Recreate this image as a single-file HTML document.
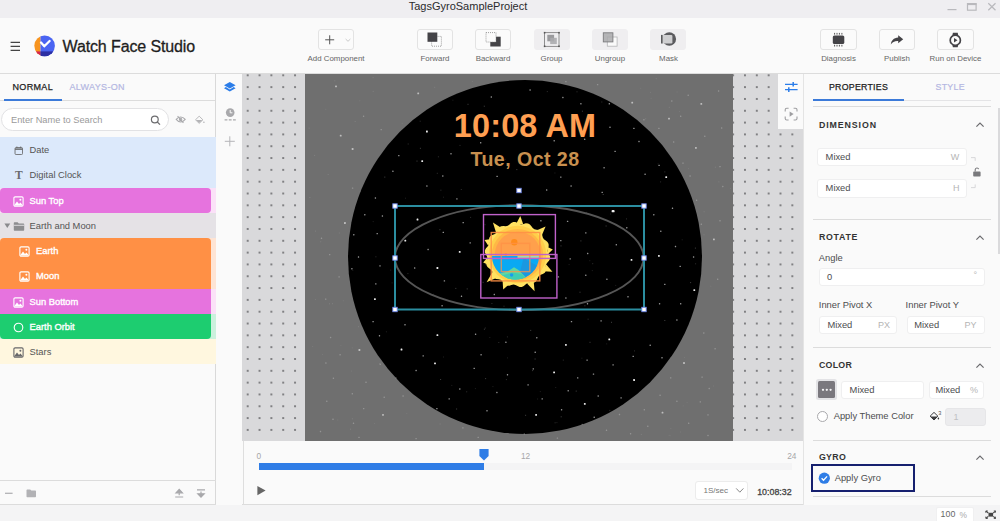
<!DOCTYPE html>
<html>
<head>
<meta charset="utf-8">
<title>Watch Face Studio</title>
<style>
*{box-sizing:border-box;margin:0;padding:0}
html,body{width:1000px;height:521px;overflow:hidden;background:#fafafa;font-family:"Liberation Sans",sans-serif;color:#555}
.abs{position:absolute}
#root{position:relative;width:1000px;height:521px;overflow:hidden}
#titlebar{left:0;top:0;width:1000px;height:18px;background:#efeef1}
#titlebar .t{left:0;width:936px;top:0;text-align:center;font-size:11px;line-height:13px;color:#2a2a2c}
#toolbar{left:0;top:18px;width:1000px;height:56px;background:#fafafa;border-bottom:1px solid #dcdcdc}
.tb{position:absolute;top:29px;width:36px;height:21px;border:1px solid #e3e3e3;border-radius:3px;background:#fbfbfb}
.tb.dis{background:#efeef0;border-color:#efeef0}
.tl{position:absolute;top:53px;width:90px;text-align:center;font-size:7.9px;line-height:12px;color:#666;white-space:nowrap}
#left{left:0;top:74px;width:216px;height:431px;background:#fafafa;border-right:1px solid #d9d9d9}
.row{position:absolute;left:0;height:25.2px;font-size:9.35px;line-height:26.4px;color:#555;white-space:nowrap}
.row span{position:absolute;top:0}
.row svg{position:absolute;margin-top:0.5px}
.sel span{color:#fff;-webkit-text-stroke:0.35px #fff}
#iconbar{left:216px;top:74px;width:26px;height:431px;background:#fafafa}
#canvas{left:242px;top:74px;width:561px;height:367px;overflow:hidden;background-color:#d9d9db}
#timeline{left:243px;top:441px;width:560px;height:64px;background:#fafafa;border-left:1px solid #dedede;border-bottom:1px solid #dcdcdc}
#right{left:803px;top:74px;width:197px;height:431px;background:#fafafa;border-left:1px solid #e4e4e4}
#status{left:0;top:505px;width:1000px;height:16px;background:#f4f4f5}
.sec{position:absolute;font-size:8.8px;font-weight:bold;letter-spacing:0.9px;color:#333;line-height:12px;white-space:nowrap}
.lbl{position:absolute;font-size:9.35px;color:#4d4d4f;line-height:12px;white-space:nowrap}
.inp{position:absolute;background:#fff;border:1px solid #efeff0;border-radius:3px}
.unit{position:absolute;font-size:9px;color:#b5b5b5;line-height:12px}
.tn{font-size:8.3px;line-height:10px;color:#a6a6a8}
.sep{position:absolute;left:813px;width:178px;height:1px;background:#dcdcdc}
</style>
</head>
<body>
<div id="root">
<!-- TITLE BAR -->
<div id="titlebar" class="abs"><div class="t abs">TagsGyroSampleProject</div>
<svg class="abs" style="left:940px;top:0" width="60" height="18" viewBox="0 0 60 18" fill="none" stroke="#b9b9bd" stroke-width="1.2">
<path d="M7.5 9.6H16.5"/><rect x="27.5" y="3.6" width="8.6" height="6.6"/><path d="M27 4.2H36.5" stroke-width="1.8"/><path d="M48.3 3.3L55.5 10.2M55.5 3.3L48.3 10.2"/></svg>
</div>
<!-- TOOLBAR -->
<div id="toolbar" class="abs"></div>
<div id="tbitems">
<svg class="abs" style="left:8px;top:38px" width="16" height="16" viewBox="0 0 16 16" stroke="#444" stroke-width="1.2"><path d="M2.6 4.3H12M2.6 8.3H12M2.6 12.4H12"/></svg>
<svg class="abs" style="left:33px;top:34px" width="24" height="24" viewBox="0 0 24 24">
<defs><clipPath id="lc"><circle cx="11.6" cy="11.85" r="10.3"/></clipPath></defs>
<g clip-path="url(#lc)"><rect x="0" y="0" width="7.5" height="24" fill="#f7941f"/><rect x="7.5" y="0" width="17" height="24" fill="#4a64f2"/><rect x="0" y="17.4" width="7.5" height="7" fill="#d4274e"/><rect x="7.5" y="17.4" width="17" height="7" fill="#2c2fa3"/></g>
<path d="M8 8.5L11.3 12.3L16.6 7" stroke="#fff" stroke-width="2.3" fill="none" stroke-linecap="round" stroke-linejoin="round"/></svg>
<div class="abs" style="left:62.5px;top:35.5px;font-size:16px;line-height:22px;color:#1e1e1e;letter-spacing:-0.12px;-webkit-text-stroke:0.3px #1e1e1e;white-space:nowrap" id="wfs" >Watch Face Studio</div>
<div class="tb" style="left:318px"></div><div class="tl" style="left:291px">Add Component</div>
<div class="tb" style="left:417px"></div><div class="tl" style="left:390px">Forward</div>
<div class="tb" style="left:475px"></div><div class="tl" style="left:448px">Backward</div>
<div class="tb dis" style="left:533.5px"></div><div class="tl" style="left:506.5px">Group</div>
<div class="tb dis" style="left:592px"></div><div class="tl" style="left:565px">Ungroup</div>
<div class="tb dis" style="left:650px"></div><div class="tl" style="left:623.5px">Mask</div>
<div class="tb" style="left:820px;width:36.5px"></div><div class="tl" style="left:793.5px">Diagnosis</div>
<div class="tb" style="left:879px"></div><div class="tl" style="left:852px">Publish</div>
<div class="tb" style="left:937px;width:36.5px"></div><div class="tl" style="left:910.5px">Run on Device</div>

<svg class="abs" style="left:312px;top:24px" width="700" height="32" viewBox="312 24 700 32">
<!-- add -->
<path d="M329.7 35.3V44.3M325.2 39.8H334.2" stroke="#555" stroke-width="1" fill="none"/>
<path d="M345.6 39L348 41.3L350.4 39" stroke="#c4c4c4" stroke-width="0.9" fill="none"/>
<!-- forward -->
<rect x="431.6" y="36.4" width="9.8" height="9.8" fill="none" stroke="#888" stroke-width="0.8" stroke-dasharray="1 1"/>
<rect x="427.5" y="32.5" width="9.8" height="9.3" fill="#444347"/>
<!-- backward -->
<rect x="490.3" y="36.7" width="10.4" height="9.8" fill="#444347"/>
<rect x="486" y="32.6" width="10" height="9.4" fill="#fbfbfb" stroke="#888" stroke-width="0.8" stroke-dasharray="1 1"/>
<!-- group -->
<rect x="544.6" y="32.7" width="14.4" height="13.6" fill="none" stroke="#666" stroke-width="0.7"/>
<g fill="#555"><rect x="543.8" y="31.9" width="1.6" height="1.6"/><rect x="558.2" y="31.9" width="1.6" height="1.6"/><rect x="543.8" y="45.5" width="1.6" height="1.6"/><rect x="558.2" y="45.5" width="1.6" height="1.6"/></g>
<rect x="547.3" y="34.8" width="6.8" height="6.5" fill="#9a9a9d"/><rect x="550.2" y="37.8" width="6.6" height="6.3" fill="#ababae" opacity="0.9"/>
<!-- ungroup -->
<rect x="607.3" y="37" width="9.8" height="9.2" fill="#fafafa" stroke="#b4b4b6" stroke-width="0.8"/>
<rect x="603.3" y="32.8" width="9.6" height="9.1" fill="#a9a9ab" fill-opacity="0.85" stroke="#7a7a7d" stroke-width="0.9"/>
<!-- mask -->
<circle cx="669.3" cy="39" r="6.8" fill="#5b5b5e"/>
<rect x="661.4" y="34.9" width="11" height="8.6" rx="1.2" fill="#cfcfd1"/><rect x="661" y="34.9" width="1.6" height="8.6" fill="#5b5b5e"/>
<!-- diagnosis -->
<rect x="832.8" y="35.5" width="11.5" height="8.6" rx="1.6" fill="#444347"/>
<g stroke="#555" stroke-width="1"><path d="M834.6 32.9V34.6M837 32.9V34.6M839.4 32.9V34.6M841.9 32.9V34.6M834.6 44.8V46.5M837 44.8V46.5M839.4 44.8V46.5M841.9 44.8V46.5"/></g>
<!-- publish -->
<path d="M898.2 35.2L903.2 39.2L898.2 43.2V40.9C894.6 40.7 892.4 41.9 890.8 44.5C891.2 40.4 893.6 37.7 898.2 37.4Z" fill="#444347"/>
<!-- run -->
<path d="M952.3 35.6L952.9 32.8H957.7L958.3 35.6ZM952.3 44.7L952.9 47.3H957.7L958.3 44.7Z" fill="#444347"/>
<circle cx="955.3" cy="40.15" r="5.1" fill="#fbfbfb" stroke="#444347" stroke-width="1.7"/>
<path d="M954 37.9L957.5 40.15L954 42.4Z" fill="#444347"/>
</svg>
</div>
<!-- LEFT PANEL -->
<div id="left" class="abs"></div>
<div id="leftitems">
<div class="abs" style="left:0;top:100px;width:215px;height:1px;background:#dcdcdc"></div>
<div class="abs" style="left:4px;top:99.2px;width:57.5px;height:1.7px;background:#3b7ad9"></div>
<div class="abs" id="tabn" style="left:12.5px;top:81px;font-size:9px;line-height:13px;color:#222;letter-spacing:0.34px;-webkit-text-stroke:0.25px #222">NORMAL</div>
<div class="abs" id="taba" style="left:69.5px;top:81px;font-size:9px;line-height:13px;color:#b4b7e2;letter-spacing:0.34px;-webkit-text-stroke:0.2px #b4b7e2">ALWAYS-ON</div>
<div class="abs" style="left:1.3px;top:108.2px;width:168px;height:23px;border:1px solid #e2e2e4;border-radius:12px;background:#fff"></div>
<div class="abs" id="srch" style="left:11px;top:114px;font-size:9.25px;line-height:13px;color:#9a9a9a;white-space:nowrap">Enter Name to Search</div>
<svg class="abs" style="left:148px;top:113px" width="60" height="14" viewBox="148 113 60 14">
<g fill="none" stroke="#6c6c6f" stroke-width="1.2"><circle cx="154.8" cy="119.5" r="3.4"/><path d="M157.3 122L160 124.6"/></g>
<g fill="none" stroke="#a9a9ac" stroke-width="1.05"><path d="M176.2 119.4C177.6 117.6 179 116.9 180.6 116.9S183.8 117.6 185.2 119.4C183.8 121.2 182.2 121.9 180.6 121.9S177.6 121.2 176.2 119.4Z"/><circle cx="180.6" cy="119.4" r="1.2"/><path d="M177.6 116.2L183.4 122.8"/></g>
<path d="M199.2 116.2L202.9 119.8L199.2 123.4L195.5 119.8Z" fill="#fafafa" stroke="#b3b3b6" stroke-width="0.9" stroke-linejoin="round"/><path d="M196 120H202.4L199.2 123.1Z" fill="#b3b3b6"/><circle cx="203.9" cy="122.2" r="0.8" fill="#b3b3b6"/>
</svg>
<div class="row" style="top:137px;width:215.5px;height:25px;background:#dce9fb"><svg style="margin-top:0.5px;left:13.6px;top:8.2px" width="9.6" height="9.6" viewBox="0 0 11 11"><rect x="1.2" y="1.8" width="8.6" height="8" rx="1.2" fill="none" stroke="#666" stroke-width="1"/><path d="M1.2 3.6H9.8" stroke="#666" stroke-width="1.6"/><path d="M3.3 0.6V2.4M7.7 0.6V2.4" stroke="#666" stroke-width="1"/></svg><span style="top:0px;left:29.5px">Date</span></div>
<div class="row" style="top:162px;width:215.5px;height:26px;background:#dce9fb"><span style="top:0.1px;left:15px;font-family:'Liberation Serif',serif;font-size:11.5px;font-weight:bold;color:#6a6a6d">T</span><span style="top:0.25px;left:29.5px">Digital Clock</span></div>
<div class="abs" style="left:0;top:188px;width:215.5px;height:25px;background:#fbe1f8"></div><div class="row sel" style="top:188px;width:210.5px;height:25px;background:#e673de;border-radius:4px 4px 4px 4px"><svg style="margin-top:0.0px;left:12.6px;top:7.6px" width="11" height="11" viewBox="0 0 11 11"><rect x="0.9" y="0.9" width="9.2" height="9.2" rx="1.2" fill="none" stroke="#fff" stroke-width="1.1"/><path d="M1 9.6L4 5.6L6 8L7.4 6.6L10 9.6Z" fill="#fff"/><circle cx="7.4" cy="3.7" r="1" fill="#fff"/></svg><span style="top:-0.5px;left:29.5px">Sun Top</span></div>
<div class="row" style="top:213px;width:215.5px;height:25px;background:#e5e2e6"><svg style="margin-top:0.25px;left:3.5px;top:10.2px" width="7" height="6" viewBox="0 0 7 6"><path d="M0.4 0.6H6.2L3.3 5Z" fill="#8a8a8d"/></svg><svg style="margin-top:0.25px;left:12.5px;top:7.4px" width="12" height="11" viewBox="0 0 12 11"><path d="M0.8 2.2C0.8 1.6 1.2 1.2 1.8 1.2H4.6L5.8 2.4H10.2C10.8 2.4 11.2 2.8 11.2 3.4V8.8C11.2 9.4 10.8 9.8 10.2 9.8H1.8C1.2 9.8 0.8 9.4 0.8 8.8Z" fill="#8d8d90"/><path d="M0.8 4.3H11.2" stroke="#e5e2e6" stroke-width="0.9"/></svg><span style="top:-0.25px;left:29.5px">Earth and Moon</span></div>
<div class="abs" style="left:0;top:238px;width:215.5px;height:25px;background:#fee4d4"></div><div class="row sel" style="top:238px;width:210.5px;height:25px;background:#ff9045;border-radius:4px 4px 0 0"><svg style="margin-top:0.5px;left:19.2px;top:7.6px" width="11" height="11" viewBox="0 0 11 11"><rect x="0.9" y="0.9" width="9.2" height="9.2" rx="1.2" fill="none" stroke="#fff" stroke-width="1.1"/><path d="M1 9.6L4 5.6L6 8L7.4 6.6L10 9.6Z" fill="#fff"/><circle cx="7.4" cy="3.7" r="1" fill="#fff"/></svg><span style="top:0px;left:36px">Earth</span></div>
<div class="abs" style="left:0;top:263px;width:215.5px;height:26px;background:#fee4d4"></div><div class="row sel" style="top:263px;width:210.5px;height:26px;background:#ff9045;border-radius:0"><svg style="margin-top:0.75px;left:19.2px;top:7.6px" width="11" height="11" viewBox="0 0 11 11"><rect x="0.9" y="0.9" width="9.2" height="9.2" rx="1.2" fill="none" stroke="#fff" stroke-width="1.1"/><path d="M1 9.6L4 5.6L6 8L7.4 6.6L10 9.6Z" fill="#fff"/><circle cx="7.4" cy="3.7" r="1" fill="#fff"/></svg><span style="top:0.25px;left:36px">Moon</span></div>
<div class="abs" style="left:0;top:289px;width:215.5px;height:25px;background:#fbe1f8"></div><div class="row sel" style="top:289px;width:210.5px;height:25px;background:#e673de;border-radius:0"><svg style="margin-top:0.0px;left:12.6px;top:7.6px" width="11" height="11" viewBox="0 0 11 11"><rect x="0.9" y="0.9" width="9.2" height="9.2" rx="1.2" fill="none" stroke="#fff" stroke-width="1.1"/><path d="M1 9.6L4 5.6L6 8L7.4 6.6L10 9.6Z" fill="#fff"/><circle cx="7.4" cy="3.7" r="1" fill="#fff"/></svg><span style="top:-0.5px;left:29.5px">Sun Bottom</span></div>
<div class="abs" style="left:0;top:314px;width:215.5px;height:25px;background:#cbf1dd"></div><div class="row sel" style="top:314px;width:210.5px;height:25px;background:#1dcd70;border-radius:0 0 4px 4px"><svg style="margin-top:0.25px;left:12.6px;top:7.4px" width="11" height="11" viewBox="0 0 11 11"><circle cx="5.5" cy="5.5" r="4.3" fill="none" stroke="#fff" stroke-width="1.1"/></svg><span style="top:-0.25px;left:29.5px">Earth Orbit</span></div>
<div class="row" style="top:339px;width:215.5px;height:25px;background:#fff7df"><svg style="margin-top:0.5px;left:12.6px;top:7.6px" width="11" height="11" viewBox="0 0 11 11"><rect x="0.9" y="0.9" width="9.2" height="9.2" rx="1.2" fill="none" stroke="#68686b" stroke-width="1.1"/><path d="M1 9.6L4 5.6L6 8L7.4 6.6L10 9.6Z" fill="#68686b"/><circle cx="7.4" cy="3.7" r="1" fill="#68686b"/></svg><span style="top:0px;left:29.5px">Stars</span></div>

<div class="abs" style="left:0;top:480px;width:215.5px;height:1px;background:#dcdcdc"></div>
<div class="abs" style="left:0;top:504px;width:1000px;height:1px;background:#dcdcdc"></div>
<svg class="abs" style="left:0;top:484px" width="215" height="18" viewBox="0 484 215 18">
<path d="M5 493.3H12.6" stroke="#b2b2b5" stroke-width="1.3"/>
<path d="M26.5 490.4C26.5 489.8 26.9 489.4 27.5 489.4H30.2L31.3 490.5H35C35.6 490.5 36 490.9 36 491.5V496.2C36 496.8 35.6 497.2 35 497.2H27.5C26.9 497.2 26.5 496.8 26.5 496.2Z" fill="#b2b2b5"/>
<path d="M175.2 497H183.2M179.2 495.2V490.4M176 492.8L179.2 489.4L182.4 492.8Z" stroke="#a8a8ab" stroke-width="1.2" fill="#a8a8ab"/>
<path d="M197 489.8H205M201 491.4V496M197.8 493.8L201 497.2L204.2 493.8Z" stroke="#a8a8ab" stroke-width="1.2" fill="#a8a8ab"/>
</svg>
</div>
<!-- ICON BAR -->
<div id="iconbar" class="abs"></div><svg class="abs" style="left:216px;top:74px" width="27" height="80" viewBox="216 74 27 80">
<path d="M229.8 82L235.6 85.3L229.8 88.6L224 85.3Z" fill="#2b7de9"/>
<path d="M224 88.2L225.9 87.1L229.8 89.4L233.7 87.1L235.6 88.2L229.8 91.6Z" fill="#2b7de9"/>
<circle cx="230.2" cy="112.6" r="4.3" fill="#a9a9ac"/><path d="M230.2 110V112.8H232.4" stroke="#fafafa" stroke-width="1" fill="none"/>
<path d="M224.6 119.9H236" stroke="#a9a9ac" stroke-width="1.3" stroke-dasharray="2.8 1.4"/>
<path d="M229.8 136.3V146.3M224.8 141.3H234.8" stroke="#b5b5b8" stroke-width="1"/>
</svg>
<!-- CANVAS -->
<div id="canvas" class="abs"><svg class="abs" style="left:0;top:0" width="561" height="367"><defs><pattern id="dots" x="-0.22" y="-4.61" width="11.84" height="11.82" patternUnits="userSpaceOnUse"><circle cx="5.92" cy="5.91" r="0.9" fill="#58585b"/></pattern></defs><rect width="561" height="364" fill="url(#dots)"/></svg><svg class="abs" style="left:1px;top:0" width="560" height="367" viewBox="0 0 560 367">
<rect x="62" y="0" width="428" height="367" fill="#6f6f6f"/>
<circle cx="282" cy="183" r="177" fill="#000"/>
<g id="stars"><rect x="92.1" y="11.4" width="1.8" height="1.8" rx="0.5" fill="#fff" opacity="0.55"/><rect x="174.3" y="18.4" width="1.8" height="1.8" rx="0.5" fill="#fff" opacity="0.55"/><rect x="96.8" y="60.8" width="1.8" height="1.8" rx="0.5" fill="#fff" opacity="0.55"/><rect x="108.7" y="74.1" width="1.8" height="1.8" rx="0.5" fill="#fff" opacity="0.55"/><rect x="119.9" y="41.6" width="1.4" height="1.4" rx="0.4" fill="#fff" opacity="0.26"/><rect x="137.5" y="54.9" width="1.4" height="1.4" rx="0.4" fill="#fff" opacity="0.26"/><rect x="108.9" y="113.4" width="1.4" height="1.4" rx="0.4" fill="#fff" opacity="0.26"/><rect x="183.0" y="56.6" width="1.8" height="1.8" rx="0.5" fill="#fff" opacity="0.92"/><rect x="178.3" y="86.3" width="1.8" height="1.8" rx="0.5" fill="#fff" opacity="0.92"/><rect x="207.3" y="79.0" width="1.4" height="1.4" rx="0.4" fill="#fff" opacity="0.58"/><rect x="199.1" y="101.3" width="1.4" height="1.4" rx="0.4" fill="#fff" opacity="0.58"/><rect x="183.2" y="111.3" width="1.4" height="1.4" rx="0.4" fill="#fff" opacity="0.58"/><rect x="247.6" y="22.3" width="1.4" height="1.4" rx="0.4" fill="#fff" opacity="0.58"/><rect x="237.0" y="68.0" width="1.4" height="1.4" rx="0.4" fill="#fff" opacity="0.58"/><rect x="253.4" y="101.7" width="1.4" height="1.4" rx="0.4" fill="#fff" opacity="0.58"/><rect x="149.2" y="96.6" width="1.4" height="1.4" rx="0.4" fill="#fff" opacity="0.58"/><rect x="155.1" y="80.9" width="1.4" height="1.4" rx="0.4" fill="#fff" opacity="0.58"/><rect x="286.4" y="15.3" width="1.4" height="1.4" rx="0.4" fill="#fff" opacity="0.58"/><rect x="319.2" y="22.8" width="1.4" height="1.4" rx="0.4" fill="#fff" opacity="0.58"/><rect x="337.2" y="29.1" width="1.4" height="1.4" rx="0.4" fill="#fff" opacity="0.58"/><rect x="365.6" y="29.1" width="1.4" height="1.4" rx="0.4" fill="#fff" opacity="0.58"/><rect x="388.3" y="27.8" width="1.8" height="1.8" rx="0.5" fill="#fff" opacity="0.55"/><rect x="428.1" y="26.3" width="1.4" height="1.4" rx="0.4" fill="#fff" opacity="0.26"/><rect x="457.4" y="28.9" width="1.8" height="1.8" rx="0.5" fill="#fff" opacity="0.55"/><rect x="444.5" y="20.5" width="1.4" height="1.4" rx="0.4" fill="#fff" opacity="0.26"/><rect x="474.9" y="16.3" width="1.4" height="1.4" rx="0.4" fill="#fff" opacity="0.26"/><rect x="425.1" y="43.7" width="1.8" height="1.8" rx="0.5" fill="#fff" opacity="0.55"/><rect x="437.0" y="41.6" width="1.4" height="1.4" rx="0.4" fill="#fff" opacity="0.26"/><rect x="400.2" y="45.1" width="1.4" height="1.4" rx="0.4" fill="#fff" opacity="0.26"/><rect x="366.3" y="52.6" width="1.4" height="1.4" rx="0.4" fill="#fff" opacity="0.58"/><rect x="390.2" y="53.7" width="1.4" height="1.4" rx="0.4" fill="#fff" opacity="0.58"/><rect x="415.2" y="53.7" width="1.4" height="1.4" rx="0.4" fill="#fff" opacity="0.26"/><rect x="452.0" y="73.0" width="1.8" height="1.8" rx="0.5" fill="#fff" opacity="0.55"/><rect x="430.0" y="67.3" width="1.4" height="1.4" rx="0.4" fill="#fff" opacity="0.26"/><rect x="461.1" y="61.5" width="1.4" height="1.4" rx="0.4" fill="#fff" opacity="0.26"/><rect x="310.5" y="66.1" width="1.4" height="1.4" rx="0.4" fill="#fff" opacity="0.58"/><rect x="341.0" y="64.5" width="1.4" height="1.4" rx="0.4" fill="#fff" opacity="0.58"/><rect x="371.4" y="76.7" width="1.4" height="1.4" rx="0.4" fill="#fff" opacity="0.58"/><rect x="395.3" y="66.8" width="1.4" height="1.4" rx="0.4" fill="#fff" opacity="0.58"/><rect x="422.3" y="102.2" width="1.8" height="1.8" rx="0.5" fill="#fff" opacity="0.92"/><rect x="360.4" y="93.1" width="1.4" height="1.4" rx="0.4" fill="#fff" opacity="0.58"/><rect x="401.4" y="99.6" width="1.4" height="1.4" rx="0.4" fill="#fff" opacity="0.58"/><rect x="317.1" y="102.4" width="1.4" height="1.4" rx="0.4" fill="#fff" opacity="0.58"/><rect x="327.4" y="111.3" width="1.4" height="1.4" rx="0.4" fill="#fff" opacity="0.58"/><rect x="303.0" y="115.3" width="1.4" height="1.4" rx="0.4" fill="#fff" opacity="0.58"/><rect x="358.5" y="117.7" width="1.4" height="1.4" rx="0.4" fill="#fff" opacity="0.58"/><rect x="415.4" y="90.7" width="1.4" height="1.4" rx="0.4" fill="#fff" opacity="0.58"/><rect x="439.3" y="88.4" width="1.4" height="1.4" rx="0.4" fill="#fff" opacity="0.26"/><rect x="476.3" y="91.9" width="1.4" height="1.4" rx="0.4" fill="#fff" opacity="0.26"/><rect x="446.4" y="101.3" width="1.4" height="1.4" rx="0.4" fill="#fff" opacity="0.26"/><rect x="479.1" y="111.8" width="1.4" height="1.4" rx="0.4" fill="#fff" opacity="0.26"/><rect x="478.0" y="53.3" width="1.4" height="1.4" rx="0.4" fill="#fff" opacity="0.26"/><rect x="322.2" y="6.9" width="1.4" height="1.4" rx="0.4" fill="#fff" opacity="0.26"/><rect x="353.9" y="9.9" width="1.4" height="1.4" rx="0.4" fill="#fff" opacity="0.26"/><rect x="131.7" y="123.3" width="1.4" height="1.4" rx="0.4" fill="#fff" opacity="0.58"/><rect x="101.0" y="148.1" width="1.8" height="1.8" rx="0.5" fill="#fff" opacity="0.55"/><rect x="110.1" y="160.0" width="1.4" height="1.4" rx="0.4" fill="#fff" opacity="0.58"/><rect x="77.8" y="163.6" width="1.4" height="1.4" rx="0.4" fill="#fff" opacity="0.26"/><rect x="86.0" y="179.9" width="1.4" height="1.4" rx="0.4" fill="#fff" opacity="0.26"/><rect x="114.8" y="182.3" width="1.4" height="1.4" rx="0.4" fill="#fff" opacity="0.58"/><rect x="108.2" y="194.0" width="1.4" height="1.4" rx="0.4" fill="#fff" opacity="0.58"/><rect x="136.3" y="191.2" width="1.4" height="1.4" rx="0.4" fill="#fff" opacity="0.58"/><rect x="95.4" y="202.2" width="1.4" height="1.4" rx="0.4" fill="#fff" opacity="0.26"/><rect x="132.1" y="209.2" width="1.4" height="1.4" rx="0.4" fill="#fff" opacity="0.58"/><rect x="131.0" y="224.2" width="1.8" height="1.8" rx="0.5" fill="#fff" opacity="0.92"/><rect x="82.0" y="224.4" width="1.4" height="1.4" rx="0.4" fill="#fff" opacity="0.26"/><rect x="173.6" y="144.6" width="1.8" height="1.8" rx="0.5" fill="#fff" opacity="0.92"/><rect x="161.4" y="165.7" width="1.8" height="1.8" rx="0.5" fill="#fff" opacity="0.92"/><rect x="199.6" y="157.7" width="1.4" height="1.4" rx="0.4" fill="#fff" opacity="0.58"/><rect x="219.5" y="147.9" width="1.4" height="1.4" rx="0.4" fill="#fff" opacity="0.58"/><rect x="184.4" y="174.8" width="1.4" height="1.4" rx="0.4" fill="#fff" opacity="0.58"/><rect x="215.8" y="176.9" width="1.8" height="1.8" rx="0.5" fill="#fff" opacity="0.92"/><rect x="193.5" y="193.1" width="1.8" height="1.8" rx="0.5" fill="#fff" opacity="0.92"/><rect x="171.0" y="193.3" width="1.4" height="1.4" rx="0.4" fill="#fff" opacity="0.58"/><rect x="200.7" y="206.2" width="1.4" height="1.4" rx="0.4" fill="#fff" opacity="0.58"/><rect x="217.8" y="221.6" width="1.4" height="1.4" rx="0.4" fill="#fff" opacity="0.58"/><rect x="198.4" y="231.0" width="1.4" height="1.4" rx="0.4" fill="#fff" opacity="0.58"/><rect x="250.6" y="219.8" width="1.4" height="1.4" rx="0.4" fill="#fff" opacity="0.58"/><rect x="213.2" y="124.2" width="1.4" height="1.4" rx="0.4" fill="#fff" opacity="0.58"/><rect x="226.5" y="168.2" width="1.4" height="1.4" rx="0.4" fill="#fff" opacity="0.58"/><rect x="133.5" y="158.9" width="1.4" height="1.4" rx="0.4" fill="#fff" opacity="0.58"/><rect x="121.1" y="140.1" width="1.4" height="1.4" rx="0.4" fill="#fff" opacity="0.58"/><rect x="138.7" y="141.3" width="1.4" height="1.4" rx="0.4" fill="#fff" opacity="0.58"/><rect x="368.6" y="136.1" width="3" height="2.2" rx="0.9" fill="#fff" opacity="0.95"/><rect x="428.8" y="133.6" width="1.4" height="1.4" rx="0.4" fill="#fff" opacity="0.58"/><rect x="410.1" y="140.1" width="1.4" height="1.4" rx="0.4" fill="#fff" opacity="0.58"/><rect x="342.1" y="158.2" width="1.4" height="1.4" rx="0.4" fill="#fff" opacity="0.58"/><rect x="317.1" y="165.9" width="1.4" height="1.4" rx="0.4" fill="#fff" opacity="0.58"/><rect x="372.6" y="170.1" width="1.4" height="1.4" rx="0.4" fill="#fff" opacity="0.58"/><rect x="344.0" y="178.8" width="1.4" height="1.4" rx="0.4" fill="#fff" opacity="0.58"/><rect x="326.5" y="184.2" width="1.4" height="1.4" rx="0.4" fill="#fff" opacity="0.58"/><rect x="387.6" y="184.9" width="1.8" height="1.8" rx="0.5" fill="#fff" opacity="0.92"/><rect x="415.0" y="180.9" width="1.8" height="1.8" rx="0.5" fill="#fff" opacity="0.92"/><rect x="431.8" y="171.8" width="1.4" height="1.4" rx="0.4" fill="#fff" opacity="0.58"/><rect x="417.1" y="156.5" width="1.4" height="1.4" rx="0.4" fill="#fff" opacity="0.58"/><rect x="449.9" y="182.3" width="1.4" height="1.4" rx="0.4" fill="#fff" opacity="0.58"/><rect x="436.5" y="191.7" width="1.4" height="1.4" rx="0.4" fill="#fff" opacity="0.58"/><rect x="363.2" y="204.5" width="1.4" height="1.4" rx="0.4" fill="#fff" opacity="0.58"/><rect x="342.1" y="200.6" width="1.4" height="1.4" rx="0.4" fill="#fff" opacity="0.58"/><rect x="421.1" y="209.7" width="1.4" height="1.4" rx="0.4" fill="#fff" opacity="0.58"/><rect x="450.4" y="215.3" width="1.8" height="1.8" rx="0.5" fill="#fff" opacity="0.92"/><rect x="384.3" y="222.1" width="1.4" height="1.4" rx="0.4" fill="#fff" opacity="0.58"/><rect x="343.8" y="229.1" width="1.4" height="1.4" rx="0.4" fill="#fff" opacity="0.58"/><rect x="322.2" y="223.3" width="1.4" height="1.4" rx="0.4" fill="#fff" opacity="0.58"/><rect x="415.9" y="229.1" width="1.4" height="1.4" rx="0.4" fill="#fff" opacity="0.58"/><rect x="437.0" y="229.1" width="1.4" height="1.4" rx="0.4" fill="#fff" opacity="0.58"/><rect x="470.0" y="164.5" width="1.8" height="1.8" rx="0.5" fill="#fff" opacity="0.55"/><rect x="457.6" y="149.5" width="1.4" height="1.4" rx="0.4" fill="#fff" opacity="0.26"/><rect x="476.3" y="146.0" width="1.4" height="1.4" rx="0.4" fill="#fff" opacity="0.26"/><rect x="474.0" y="204.5" width="1.4" height="1.4" rx="0.4" fill="#fff" opacity="0.26"/><rect x="452.9" y="125.6" width="1.4" height="1.4" rx="0.4" fill="#fff" opacity="0.26"/><rect x="314.7" y="202.2" width="1.4" height="1.4" rx="0.4" fill="#fff" opacity="0.58"/><rect x="297.2" y="146.0" width="1.4" height="1.4" rx="0.4" fill="#fff" opacity="0.58"/><rect x="323.9" y="146.7" width="1.4" height="1.4" rx="0.4" fill="#fff" opacity="0.58"/><rect x="383.1" y="153.0" width="1.4" height="1.4" rx="0.4" fill="#fff" opacity="0.58"/><rect x="193.5" y="260.2" width="1.8" height="1.8" rx="0.5" fill="#fff" opacity="0.92"/><rect x="157.6" y="274.6" width="1.8" height="1.8" rx="0.5" fill="#fff" opacity="0.92"/><rect x="191.1" y="288.5" width="1.8" height="1.8" rx="0.5" fill="#fff" opacity="0.92"/><rect x="237.4" y="280.0" width="1.4" height="1.4" rx="0.4" fill="#fff" opacity="0.58"/><rect x="179.5" y="281.2" width="1.4" height="1.4" rx="0.4" fill="#fff" opacity="0.58"/><rect x="231.9" y="259.5" width="1.4" height="1.4" rx="0.4" fill="#fff" opacity="0.58"/><rect x="262.2" y="267.5" width="1.4" height="1.4" rx="0.4" fill="#fff" opacity="0.58"/><rect x="263.8" y="300.1" width="1.4" height="1.4" rx="0.4" fill="#fff" opacity="0.58"/><rect x="253.2" y="317.8" width="1.4" height="1.4" rx="0.4" fill="#fff" opacity="0.58"/><rect x="216.1" y="314.3" width="1.4" height="1.4" rx="0.4" fill="#fff" opacity="0.58"/><rect x="172.4" y="295.8" width="1.4" height="1.4" rx="0.4" fill="#fff" opacity="0.58"/><rect x="205.5" y="324.2" width="1.4" height="1.4" rx="0.4" fill="#fff" opacity="0.58"/><rect x="193.2" y="333.9" width="1.4" height="1.4" rx="0.4" fill="#fff" opacity="0.58"/><rect x="243.3" y="336.0" width="1.4" height="1.4" rx="0.4" fill="#fff" opacity="0.58"/><rect x="161.3" y="250.0" width="1.4" height="1.4" rx="0.4" fill="#fff" opacity="0.58"/><rect x="129.4" y="246.9" width="1.4" height="1.4" rx="0.4" fill="#fff" opacity="0.58"/><rect x="135.8" y="261.1" width="1.4" height="1.4" rx="0.4" fill="#fff" opacity="0.58"/><rect x="230.5" y="293.7" width="1.4" height="1.4" rx="0.4" fill="#fff" opacity="0.58"/><rect x="115.5" y="275.1" width="1.8" height="1.8" rx="0.5" fill="#fff" opacity="0.55"/><rect x="82.2" y="288.3" width="1.4" height="1.4" rx="0.4" fill="#fff" opacity="0.26"/><rect x="89.7" y="303.6" width="1.4" height="1.4" rx="0.4" fill="#fff" opacity="0.26"/><rect x="83.1" y="326.5" width="1.4" height="1.4" rx="0.4" fill="#fff" opacity="0.26"/><rect x="139.1" y="340.0" width="1.8" height="1.8" rx="0.5" fill="#fff" opacity="0.55"/><rect x="120.0" y="333.9" width="1.4" height="1.4" rx="0.4" fill="#fff" opacity="0.26"/><rect x="108.6" y="319.0" width="1.4" height="1.4" rx="0.4" fill="#fff" opacity="0.26"/><rect x="122.3" y="307.6" width="1.4" height="1.4" rx="0.4" fill="#fff" opacity="0.26"/><rect x="136.5" y="289.5" width="1.4" height="1.4" rx="0.4" fill="#fff" opacity="0.26"/><rect x="152.3" y="303.2" width="1.4" height="1.4" rx="0.4" fill="#fff" opacity="0.26"/><rect x="159.4" y="321.3" width="1.4" height="1.4" rx="0.4" fill="#fff" opacity="0.26"/><rect x="140.5" y="322.5" width="1.4" height="1.4" rx="0.4" fill="#fff" opacity="0.26"/><rect x="86.9" y="262.8" width="1.4" height="1.4" rx="0.4" fill="#fff" opacity="0.26"/><rect x="96.4" y="280.0" width="1.4" height="1.4" rx="0.4" fill="#fff" opacity="0.26"/><rect x="89.3" y="344.5" width="1.4" height="1.4" rx="0.4" fill="#fff" opacity="0.26"/><rect x="109.8" y="348.5" width="1.4" height="1.4" rx="0.4" fill="#fff" opacity="0.26"/><rect x="115.3" y="362.7" width="1.4" height="1.4" rx="0.4" fill="#fff" opacity="0.26"/><rect x="172.4" y="363.9" width="1.4" height="1.4" rx="0.4" fill="#fff" opacity="0.26"/><rect x="219.2" y="353.2" width="1.4" height="1.4" rx="0.4" fill="#fff" opacity="0.26"/><rect x="234.5" y="362.7" width="1.4" height="1.4" rx="0.4" fill="#fff" opacity="0.26"/><rect x="76.8" y="356.8" width="1.4" height="1.4" rx="0.4" fill="#fff" opacity="0.26"/><rect x="365.4" y="264.5" width="1.8" height="1.8" rx="0.5" fill="#fff" opacity="0.92"/><rect x="322.0" y="269.9" width="1.8" height="1.8" rx="0.5" fill="#fff" opacity="0.92"/><rect x="293.1" y="263.0" width="1.4" height="1.4" rx="0.4" fill="#fff" opacity="0.58"/><rect x="327.8" y="246.9" width="1.4" height="1.4" rx="0.4" fill="#fff" opacity="0.58"/><rect x="357.4" y="246.2" width="1.4" height="1.4" rx="0.4" fill="#fff" opacity="0.58"/><rect x="433.2" y="245.3" width="1.4" height="1.4" rx="0.4" fill="#fff" opacity="0.58"/><rect x="406.5" y="270.6" width="1.4" height="1.4" rx="0.4" fill="#fff" opacity="0.58"/><rect x="389.5" y="281.7" width="1.4" height="1.4" rx="0.4" fill="#fff" opacity="0.58"/><rect x="369.4" y="290.2" width="1.4" height="1.4" rx="0.4" fill="#fff" opacity="0.58"/><rect x="343.4" y="285.4" width="1.4" height="1.4" rx="0.4" fill="#fff" opacity="0.58"/><rect x="310.2" y="297.5" width="1.8" height="1.8" rx="0.5" fill="#fff" opacity="0.92"/><rect x="390.2" y="305.1" width="1.8" height="1.8" rx="0.5" fill="#fff" opacity="0.92"/><rect x="334.0" y="303.2" width="1.4" height="1.4" rx="0.4" fill="#fff" opacity="0.58"/><rect x="349.8" y="299.4" width="1.4" height="1.4" rx="0.4" fill="#fff" opacity="0.58"/><rect x="291.5" y="277.6" width="1.4" height="1.4" rx="0.4" fill="#fff" opacity="0.58"/><rect x="289.6" y="294.2" width="1.4" height="1.4" rx="0.4" fill="#fff" opacity="0.58"/><rect x="284.4" y="310.2" width="1.4" height="1.4" rx="0.4" fill="#fff" opacity="0.58"/><rect x="298.5" y="324.2" width="1.4" height="1.4" rx="0.4" fill="#fff" opacity="0.58"/><rect x="340.9" y="328.9" width="1.8" height="1.8" rx="0.5" fill="#fff" opacity="0.92"/><rect x="354.5" y="321.3" width="1.4" height="1.4" rx="0.4" fill="#fff" opacity="0.58"/><rect x="377.4" y="323.2" width="1.4" height="1.4" rx="0.4" fill="#fff" opacity="0.58"/><rect x="317.9" y="335.0" width="1.4" height="1.4" rx="0.4" fill="#fff" opacity="0.58"/><rect x="292.2" y="340.0" width="1.8" height="1.8" rx="0.5" fill="#fff" opacity="0.92"/><rect x="350.5" y="342.6" width="1.4" height="1.4" rx="0.4" fill="#fff" opacity="0.58"/><rect x="338.5" y="349.7" width="1.4" height="1.4" rx="0.4" fill="#fff" opacity="0.26"/><rect x="280.6" y="359.1" width="1.4" height="1.4" rx="0.4" fill="#fff" opacity="0.26"/><rect x="324.5" y="316.1" width="1.4" height="1.4" rx="0.4" fill="#fff" opacity="0.58"/><rect x="418.3" y="283.1" width="1.4" height="1.4" rx="0.4" fill="#fff" opacity="0.58"/><rect x="440.1" y="288.1" width="1.8" height="1.8" rx="0.5" fill="#fff" opacity="0.55"/><rect x="460.1" y="258.3" width="1.4" height="1.4" rx="0.4" fill="#fff" opacity="0.26"/><rect x="471.4" y="274.1" width="1.4" height="1.4" rx="0.4" fill="#fff" opacity="0.26"/><rect x="427.0" y="303.2" width="1.4" height="1.4" rx="0.4" fill="#fff" opacity="0.26"/><rect x="458.4" y="302.4" width="1.4" height="1.4" rx="0.4" fill="#fff" opacity="0.26"/><rect x="465.5" y="313.8" width="1.4" height="1.4" rx="0.4" fill="#fff" opacity="0.26"/><rect x="456.6" y="327.2" width="1.4" height="1.4" rx="0.4" fill="#fff" opacity="0.26"/><rect x="433.2" y="326.5" width="1.4" height="1.4" rx="0.4" fill="#fff" opacity="0.26"/><rect x="416.4" y="320.6" width="1.4" height="1.4" rx="0.4" fill="#fff" opacity="0.26"/><rect x="418.6" y="337.7" width="1.8" height="1.8" rx="0.5" fill="#fff" opacity="0.55"/><rect x="464.3" y="340.2" width="1.4" height="1.4" rx="0.4" fill="#fff" opacity="0.26"/><rect x="400.6" y="335.0" width="1.4" height="1.4" rx="0.4" fill="#fff" opacity="0.26"/><rect x="375.8" y="339.8" width="1.4" height="1.4" rx="0.4" fill="#fff" opacity="0.26"/><rect x="404.1" y="351.6" width="1.4" height="1.4" rx="0.4" fill="#fff" opacity="0.26"/><rect x="445.0" y="348.5" width="1.4" height="1.4" rx="0.4" fill="#fff" opacity="0.26"/><rect x="362.8" y="355.6" width="1.4" height="1.4" rx="0.4" fill="#fff" opacity="0.26"/><rect x="386.9" y="359.1" width="1.4" height="1.4" rx="0.4" fill="#fff" opacity="0.26"/><rect x="313.7" y="363.4" width="1.4" height="1.4" rx="0.4" fill="#fff" opacity="0.26"/><rect x="464.3" y="360.8" width="1.4" height="1.4" rx="0.4" fill="#fff" opacity="0.26"/><rect x="164.4" y="199.1" width="1" height="1" fill="#fff" opacity="0.18"/><rect x="451.9" y="173.6" width="1" height="1" fill="#fff" opacity="0.25"/><rect x="91.3" y="6.3" width="1" height="1" fill="#fff" opacity="0.12"/><rect x="173.5" y="86.6" width="1" height="1" fill="#fff" opacity="0.25"/><rect x="262.9" y="305.1" width="1" height="1" fill="#fff" opacity="0.18"/><rect x="231.9" y="314.1" width="1" height="1" fill="#fff" opacity="0.12"/><rect x="332.7" y="316.6" width="1" height="1" fill="#fff" opacity="0.25"/><rect x="228.8" y="7.0" width="1" height="1" fill="#fff" opacity="0.08"/><rect x="131.1" y="349.1" width="1" height="1" fill="#fff" opacity="0.08"/><rect x="191.2" y="12.8" width="1" height="1" fill="#fff" opacity="0.12"/><rect x="263.9" y="262.4" width="1" height="1" fill="#fff" opacity="0.18"/><rect x="366.3" y="335.9" width="1" height="1" fill="#fff" opacity="0.18"/><rect x="372.2" y="210.9" width="1" height="1" fill="#fff" opacity="0.12"/><rect x="436.1" y="36.9" width="1" height="1" fill="#fff" opacity="0.08"/><rect x="273.3" y="95.1" width="1" height="1" fill="#fff" opacity="0.25"/><rect x="248.4" y="229.0" width="1" height="1" fill="#fff" opacity="0.18"/><rect x="242.1" y="304.1" width="1" height="1" fill="#fff" opacity="0.25"/><rect x="212.3" y="213.9" width="1" height="1" fill="#fff" opacity="0.25"/><rect x="162.0" y="123.7" width="1" height="1" fill="#fff" opacity="0.12"/><rect x="426.6" y="361.2" width="1" height="1" fill="#fff" opacity="0.08"/><rect x="359.7" y="120.0" width="1" height="1" fill="#fff" opacity="0.25"/><rect x="447.1" y="208.1" width="1" height="1" fill="#fff" opacity="0.25"/><rect x="341.4" y="231.3" width="1" height="1" fill="#fff" opacity="0.25"/><rect x="176.7" y="46.7" width="1" height="1" fill="#fff" opacity="0.18"/><rect x="425.6" y="360.8" width="1" height="1" fill="#fff" opacity="0.08"/><rect x="209.4" y="25.7" width="1" height="1" fill="#fff" opacity="0.12"/><rect x="72.0" y="156.6" width="1" height="1" fill="#fff" opacity="0.12"/><rect x="433.6" y="17.5" width="1" height="1" fill="#fff" opacity="0.08"/><rect x="223.7" y="214.4" width="1" height="1" fill="#fff" opacity="0.25"/><rect x="437.0" y="357.5" width="1" height="1" fill="#fff" opacity="0.08"/><rect x="486.9" y="113.9" width="1" height="1" fill="#fff" opacity="0.08"/><rect x="109.3" y="195.9" width="1" height="1" fill="#fff" opacity="0.12"/><rect x="475.4" y="107.4" width="1" height="1" fill="#fff" opacity="0.12"/><rect x="129.7" y="16.9" width="1" height="1" fill="#fff" opacity="0.12"/><rect x="196.6" y="349.5" width="1" height="1" fill="#fff" opacity="0.12"/><rect x="223.2" y="317.3" width="1" height="1" fill="#fff" opacity="0.18"/><rect x="336.5" y="217.7" width="1" height="1" fill="#fff" opacity="0.25"/><rect x="107.0" y="354.7" width="1" height="1" fill="#fff" opacity="0.12"/><rect x="246.3" y="263.0" width="1" height="1" fill="#fff" opacity="0.12"/><rect x="460.5" y="160.3" width="1" height="1" fill="#fff" opacity="0.12"/><rect x="284.5" y="200.6" width="1" height="1" fill="#fff" opacity="0.12"/><rect x="397.8" y="359.9" width="1" height="1" fill="#fff" opacity="0.12"/><rect x="72.0" y="225.0" width="1" height="1" fill="#fff" opacity="0.08"/><rect x="89.0" y="229.2" width="1" height="1" fill="#fff" opacity="0.12"/><rect x="213.1" y="334.5" width="1" height="1" fill="#fff" opacity="0.25"/><rect x="363.2" y="269.4" width="1" height="1" fill="#fff" opacity="0.12"/><rect x="313.4" y="348.1" width="1" height="1" fill="#fff" opacity="0.12"/><rect x="471.9" y="92.7" width="1" height="1" fill="#fff" opacity="0.12"/><rect x="190.1" y="219.8" width="1" height="1" fill="#fff" opacity="0.12"/><rect x="217.8" y="115.0" width="1" height="1" fill="#fff" opacity="0.18"/><rect x="421.3" y="97.4" width="1" height="1" fill="#fff" opacity="0.18"/><rect x="108.0" y="296.6" width="1" height="1" fill="#fff" opacity="0.08"/><rect x="194.9" y="82.3" width="1" height="1" fill="#fff" opacity="0.18"/><rect x="164.7" y="69.5" width="1" height="1" fill="#fff" opacity="0.18"/><rect x="338.9" y="36.7" width="1" height="1" fill="#fff" opacity="0.25"/><rect x="200.0" y="122.7" width="1" height="1" fill="#fff" opacity="0.12"/><rect x="249.4" y="312.1" width="1" height="1" fill="#fff" opacity="0.12"/><rect x="97.4" y="270.9" width="1" height="1" fill="#fff" opacity="0.08"/><rect x="438.7" y="165.3" width="1" height="1" fill="#fff" opacity="0.12"/><rect x="397.2" y="13.8" width="1" height="1" fill="#fff" opacity="0.08"/><rect x="197.1" y="305.0" width="1" height="1" fill="#fff" opacity="0.25"/><rect x="141.3" y="102.6" width="1" height="1" fill="#fff" opacity="0.25"/><rect x="99.8" y="226.3" width="1" height="1" fill="#fff" opacity="0.08"/><rect x="242.1" y="189.7" width="1" height="1" fill="#fff" opacity="0.18"/><rect x="260.5" y="231.7" width="1" height="1" fill="#fff" opacity="0.18"/><rect x="241.5" y="150.2" width="1" height="1" fill="#fff" opacity="0.18"/><rect x="129.6" y="3.2" width="1" height="1" fill="#fff" opacity="0.12"/><rect x="300.5" y="359.3" width="1" height="1" fill="#fff" opacity="0.08"/><rect x="77.2" y="167.3" width="1" height="1" fill="#fff" opacity="0.12"/><rect x="294.1" y="324.5" width="1" height="1" fill="#fff" opacity="0.12"/><rect x="427.3" y="354.0" width="1" height="1" fill="#fff" opacity="0.08"/><rect x="407.0" y="17.9" width="1" height="1" fill="#fff" opacity="0.08"/><rect x="443.6" y="328.1" width="1" height="1" fill="#fff" opacity="0.08"/><rect x="69.1" y="272.0" width="1" height="1" fill="#fff" opacity="0.08"/><rect x="276.9" y="88.3" width="1" height="1" fill="#fff" opacity="0.12"/><rect x="286.1" y="151.7" width="1" height="1" fill="#fff" opacity="0.25"/><rect x="111.7" y="47.0" width="1" height="1" fill="#fff" opacity="0.12"/><rect x="407.6" y="23.8" width="1" height="1" fill="#fff" opacity="0.08"/><rect x="147.2" y="195.6" width="1" height="1" fill="#fff" opacity="0.12"/><rect x="136.1" y="288.9" width="1" height="1" fill="#fff" opacity="0.08"/><rect x="412.7" y="4.2" width="1" height="1" fill="#fff" opacity="0.12"/><rect x="84.7" y="100.0" width="1" height="1" fill="#fff" opacity="0.12"/><rect x="325.6" y="190.1" width="1" height="1" fill="#fff" opacity="0.12"/><rect x="264.0" y="283.4" width="1" height="1" fill="#fff" opacity="0.12"/><rect x="426.9" y="282.9" width="1" height="1" fill="#fff" opacity="0.08"/><rect x="116.3" y="26.3" width="1" height="1" fill="#fff" opacity="0.08"/><rect x="425.8" y="32.8" width="1" height="1" fill="#fff" opacity="0.12"/><rect x="197.4" y="115.7" width="1" height="1" fill="#fff" opacity="0.18"/><rect x="227.1" y="142.9" width="1" height="1" fill="#fff" opacity="0.18"/><rect x="216.5" y="70.9" width="1" height="1" fill="#fff" opacity="0.18"/><rect x="245.3" y="47.8" width="1" height="1" fill="#fff" opacity="0.12"/><rect x="367.1" y="139.5" width="1" height="1" fill="#fff" opacity="0.12"/><rect x="303.8" y="17.1" width="1" height="1" fill="#fff" opacity="0.18"/><rect x="319.8" y="285.6" width="1" height="1" fill="#fff" opacity="0.18"/><rect x="333.5" y="17.3" width="1" height="1" fill="#fff" opacity="0.18"/><rect x="86.0" y="229.3" width="1" height="1" fill="#fff" opacity="0.12"/><rect x="241.8" y="253.5" width="1" height="1" fill="#fff" opacity="0.18"/><rect x="71.1" y="80.9" width="1" height="1" fill="#fff" opacity="0.12"/><rect x="358.3" y="27.5" width="1" height="1" fill="#fff" opacity="0.18"/><rect x="158.7" y="48.8" width="1" height="1" fill="#fff" opacity="0.08"/><rect x="460.6" y="137.3" width="1" height="1" fill="#fff" opacity="0.12"/><rect x="115.0" y="252.2" width="1" height="1" fill="#fff" opacity="0.12"/><rect x="346.5" y="267.8" width="1" height="1" fill="#fff" opacity="0.25"/><rect x="289.1" y="296.1" width="1" height="1" fill="#fff" opacity="0.25"/><rect x="65.6" y="53.6" width="1" height="1" fill="#fff" opacity="0.12"/><rect x="82.3" y="34.8" width="1" height="1" fill="#fff" opacity="0.08"/><rect x="343.0" y="137.9" width="1" height="1" fill="#fff" opacity="0.12"/><rect x="208.3" y="310.9" width="1" height="1" fill="#fff" opacity="0.12"/><rect x="421.3" y="246.0" width="1" height="1" fill="#fff" opacity="0.25"/><rect x="467.3" y="211.7" width="1" height="1" fill="#fff" opacity="0.08"/><rect x="78.9" y="280.1" width="1" height="1" fill="#fff" opacity="0.08"/><rect x="108.8" y="273.4" width="1" height="1" fill="#fff" opacity="0.08"/><rect x="296.8" y="317.1" width="1" height="1" fill="#fff" opacity="0.12"/><rect x="414.6" y="89.4" width="1" height="1" fill="#fff" opacity="0.12"/><rect x="337.4" y="166.4" width="1" height="1" fill="#fff" opacity="0.25"/><rect x="383.0" y="144.4" width="1" height="1" fill="#fff" opacity="0.18"/><rect x="317.7" y="342.3" width="1" height="1" fill="#fff" opacity="0.25"/><rect x="240.8" y="31.7" width="1" height="1" fill="#fff" opacity="0.25"/><rect x="163.3" y="338.9" width="1" height="1" fill="#fff" opacity="0.08"/><rect x="239.6" y="207.8" width="1" height="1" fill="#fff" opacity="0.25"/><rect x="349.2" y="189.2" width="1" height="1" fill="#fff" opacity="0.18"/><rect x="129.7" y="147.1" width="1" height="1" fill="#fff" opacity="0.12"/><rect x="132.4" y="182.3" width="1" height="1" fill="#fff" opacity="0.18"/><rect x="452.1" y="189.3" width="1" height="1" fill="#fff" opacity="0.18"/><rect x="312.2" y="313.0" width="1" height="1" fill="#fff" opacity="0.12"/><rect x="176.9" y="73.8" width="1" height="1" fill="#fff" opacity="0.25"/><rect x="282.1" y="340.8" width="1" height="1" fill="#fff" opacity="0.25"/><rect x="291.6" y="284.5" width="1" height="1" fill="#fff" opacity="0.25"/><rect x="362.6" y="151.5" width="1" height="1" fill="#fff" opacity="0.25"/><rect x="311.4" y="98.5" width="1" height="1" fill="#fff" opacity="0.12"/><rect x="193.8" y="98.8" width="1" height="1" fill="#fff" opacity="0.18"/><rect x="148.6" y="208.4" width="1" height="1" fill="#fff" opacity="0.12"/><rect x="200.0" y="282.5" width="1" height="1" fill="#fff" opacity="0.12"/><rect x="240.9" y="254.7" width="1" height="1" fill="#fff" opacity="0.25"/><rect x="317.5" y="171.4" width="1" height="1" fill="#fff" opacity="0.25"/><rect x="299.7" y="176.2" width="1" height="1" fill="#fff" opacity="0.25"/><rect x="94.2" y="345.5" width="1" height="1" fill="#fff" opacity="0.08"/><rect x="261.7" y="84.8" width="1" height="1" fill="#fff" opacity="0.12"/><rect x="338.4" y="283.7" width="1" height="1" fill="#fff" opacity="0.12"/><rect x="470.0" y="311.5" width="1" height="1" fill="#fff" opacity="0.08"/><rect x="440.9" y="283.1" width="1" height="1" fill="#fff" opacity="0.08"/><rect x="142.9" y="257.3" width="1" height="1" fill="#fff" opacity="0.12"/><rect x="445.0" y="94.1" width="1" height="1" fill="#fff" opacity="0.08"/><rect x="196.4" y="155.2" width="1" height="1" fill="#fff" opacity="0.25"/><rect x="402.2" y="44.3" width="1" height="1" fill="#fff" opacity="0.12"/><rect x="417.1" y="107.4" width="1" height="1" fill="#fff" opacity="0.18"/><rect x="255.3" y="268.0" width="1" height="1" fill="#fff" opacity="0.18"/><rect x="66.4" y="123.0" width="1" height="1" fill="#fff" opacity="0.12"/><rect x="224.5" y="29.8" width="1" height="1" fill="#fff" opacity="0.25"/><rect x="311.6" y="348.3" width="1" height="1" fill="#fff" opacity="0.18"/><rect x="116.7" y="117.2" width="1" height="1" fill="#fff" opacity="0.12"/><rect x="95.8" y="158.5" width="1" height="1" fill="#fff" opacity="0.12"/><rect x="439.7" y="331.4" width="1" height="1" fill="#fff" opacity="0.08"/><rect x="287.2" y="255.9" width="1" height="1" fill="#fff" opacity="0.25"/><rect x="391.0" y="276.4" width="1" height="1" fill="#fff" opacity="0.18"/><rect x="344.6" y="244.7" width="1" height="1" fill="#fff" opacity="0.18"/><rect x="108.9" y="344.3" width="1" height="1" fill="#fff" opacity="0.12"/><rect x="348.8" y="196.1" width="1" height="1" fill="#fff" opacity="0.12"/><rect x="346.3" y="186.2" width="1" height="1" fill="#fff" opacity="0.12"/><rect x="368.0" y="247.8" width="1" height="1" fill="#fff" opacity="0.25"/></g>
<ellipse cx="276.25" cy="183.6" rx="124.3" ry="52.4" fill="none" stroke="#565656" stroke-width="1.9"/>
<g id="sun">
<g fill="#ffe262"><path d="M273.1 150.0L277.3 142.1L280.3 150.6Z"/><path d="M253.1 158.8L249.9 148.6L258.9 154.3Z"/><path d="M293.4 156.6L302.6 152.6L298.6 161.8Z"/><path d="M304.0 172.7L309.8 175.6L305.0 180.0Z"/><path d="M303.3 190.6L309.4 197.7L300.0 197.2Z"/><path d="M290.6 206.4L291.6 217.2L284.0 209.5Z"/><path d="M266.4 209.9L260.2 215.4L259.6 207.1Z"/><path d="M254.4 203.4L243.6 208.2L249.5 198.0Z"/><path d="M245.8 190.9L240.2 188.5L244.2 183.8Z"/><path d="M245.3 171.7L241.5 166.0L248.2 165.0Z"/><path d="M306.1 180.5L307.1 182.6L307.1 184.8L306.0 186.8L304.4 188.5L303.2 190.2L302.8 192.2L303.0 194.6L302.8 196.9L301.8 198.7L299.8 199.9L297.7 200.8L295.9 201.9L294.8 203.7L293.9 205.8L292.7 207.8L290.9 208.8L288.6 209.0L286.2 208.8L284.2 209.2L282.5 210.4L280.8 212.0L278.8 213.1L276.6 213.1L274.5 212.1L272.5 211.0L270.5 210.6L268.4 211.0L266.2 211.7L263.9 211.6L262.1 210.5L260.6 208.7L259.3 206.9L257.6 205.8L255.5 205.3L253.1 204.9L251.2 203.8L250.1 201.9L249.7 199.5L249.2 197.4L248.1 195.7L246.3 194.4L244.5 192.9L243.4 191.1L243.3 188.8L244.0 186.6L244.4 184.5L244.0 182.5L242.9 180.5L241.9 178.4L241.9 176.2L243.0 174.2L244.6 172.5L245.8 170.8L246.2 168.8L246.0 166.4L246.2 164.1L247.2 162.3L249.2 161.1L251.3 160.2L253.1 159.1L254.2 157.3L255.1 155.2L256.3 153.2L258.1 152.2L260.4 152.0L262.8 152.2L264.8 151.8L266.5 150.6L268.2 149.0L270.2 147.9L272.4 147.9L274.5 148.9L276.5 150.0L278.5 150.4L280.6 150.0L282.8 149.3L285.1 149.4L286.9 150.5L288.4 152.3L289.7 154.1L291.4 155.2L293.5 155.7L295.9 156.1L297.8 157.2L298.9 159.1L299.3 161.5L299.8 163.6L300.9 165.3L302.7 166.6L304.5 168.1L305.6 169.9L305.7 172.2L305.0 174.4L304.6 176.5L305.0 178.5Z"/></g>
<circle cx="274.5" cy="180.5" r="28.7" fill="#ffd04a"/>
<circle cx="274.5" cy="180.5" r="25.6" fill="#ffb845"/>
<circle cx="274.8" cy="180.8" r="23" fill="#ffa04c"/>
<circle cx="271.3" cy="168.2" r="3.2" fill="#ff8c1c"/>
<circle cx="262.8" cy="180.4" r="1.5" fill="#ff8f3a"/>
<defs><clipPath id="ec"><path d="M249.0 182A23.5 23.5 0 0 0 296.0 182Z"/></clipPath></defs>
<g clip-path="url(#ec)">
<rect x="248.5" y="181" width="48" height="26" fill="#0aa9f2"/>
<path d="M280.5 184L285.5 187L296.5 193V208H274.5Z" fill="#1a98e0"/>
<rect x="274.5" y="181" width="22" height="3.2" fill="#9ddcae"/>
<path d="M254.5 200L264.5 197.5L271.0 193.2L275.5 196L283.5 204L277.5 208H256.5Z" fill="#5ed9a3"/>
<path d="M256.5 202L269.5 198.5L278.5 200L283.5 204L277.5 208H258.5Z" fill="#3fcdb4"/>
<circle cx="268.6" cy="201" r="1.7" fill="#1a9af0"/>
</g>
<g fill="none" stroke-width="1.4">
<rect x="248.2" y="158.5" width="48.6" height="48.4" stroke="#ff9045" opacity="0.9"/>
<rect x="258.3" y="169.4" width="28.5" height="28.2" stroke="#ff9045" opacity="0.75"/>
<rect x="240.5" y="140.6" width="71.9" height="43.8" stroke="#c062cb"/>
<rect x="237.8" y="180.5" width="76.1" height="43.5" stroke="#c062cb"/>
</g>
</g>
<rect x="152" y="132" width="249" height="103.5" fill="none" stroke="#2b8ea0" stroke-width="2"/>
<g fill="#fff" stroke="#6d86e8" stroke-width="0.9">
<rect x="149.8" y="129.8" width="4.4" height="4.4"/><rect x="273.8" y="129.8" width="4.4" height="4.4"/><rect x="398.8" y="129.8" width="4.4" height="4.4"/>
<rect x="149.8" y="181.8" width="4.4" height="4.4"/><rect x="398.8" y="181.8" width="4.4" height="4.4"/>
<rect x="149.8" y="233.3" width="4.4" height="4.4"/><rect x="273.8" y="233.3" width="4.4" height="4.4"/><rect x="398.8" y="233.3" width="4.4" height="4.4"/>
<rect x="273.8" y="114.3" width="4.4" height="4.4"/>
</g>
</svg>
<div class="abs" id="clk" style="left:133px;width:300px;top:31.9px;text-align:center;font-size:32.4px;line-height:40px;font-weight:bold;color:#ff9f52;white-space:nowrap;letter-spacing:0.17px">10:08 AM</div>
<div class="abs" id="dat" style="left:133px;width:300px;top:71.6px;text-align:center;font-size:19.6px;line-height:26px;font-weight:bold;color:#c8904f;white-space:nowrap;letter-spacing:0.44px">Tue, Oct 28</div>
</div>
<div class="abs" style="left:778px;top:74px;width:25px;height:54.6px;background:#fafafa"></div>
<svg class="abs" style="left:778px;top:74px" width="25" height="55" viewBox="778 74 25 55">
<g stroke="#2b7de9" stroke-width="1.3" fill="none"><path d="M785 84.3H797.6M785 89.6H797.6"/><path d="M793.2 82V86.6M788.8 87.3V91.9" stroke-width="1.5"/></g>
<g stroke="#9e9ea1" stroke-width="1.1" fill="none"><path d="M785.2 111.6V109.8C785.2 108.9 785.9 108.2 786.8 108.2H788.6M793.6 108.2H795.4C796.3 108.2 797 108.9 797 109.8V111.6M797 116.6V118.4C797 119.3 796.3 120 795.4 120H793.6M788.6 120H786.8C785.9 120 785.2 119.3 785.2 118.4V116.6"/></g>
<path d="M789.6 111.5L793.6 114.1L789.6 116.7Z" fill="#9e9ea1"/>
</svg>
<!-- TIMELINE -->
<div id="timeline" class="abs">
<div class="abs" style="left:14.8px;top:21.6px;width:533px;height:7.6px;background:#f4f4f5"></div>
<div class="abs" style="left:14.8px;top:21.6px;width:225px;height:7.6px;background:#2f7de6"></div>
<svg class="abs" style="left:234.3px;top:7px" width="12" height="13" viewBox="0 0 12 13"><path d="M1.4 0.9H10.6V8L6 12.4L1.4 8Z" fill="#2f7de6"/></svg>
<div class="abs tn" style="left:12.6px;top:10.2px">0</div>
<div class="abs tn" style="left:277px;top:10.2px">12</div>
<div class="abs tn" style="left:543.2px;top:10.2px">24</div>
<svg class="abs" style="left:12px;top:44px" width="11" height="11" viewBox="0 0 11 11"><path d="M1.4 1L9.6 5.6L1.4 10.2Z" fill="#666"/></svg>
<div class="abs" style="left:451.4px;top:40.4px;width:53px;height:18.4px;background:#fff;border:1px solid #ececec;border-radius:3px"></div>
<div class="abs" id="spd" style="left:459.4px;top:43.6px;font-size:8.1px;line-height:11px;color:#777">1S/sec</div>
<svg class="abs" style="left:491px;top:46px" width="10" height="7" viewBox="0 0 10 7"><path d="M1.2 1.4L4.8 5.2L8.4 1.4" stroke="#888" stroke-width="1" fill="none"/></svg>
<div class="abs" id="tcode" style="left:513.2px;top:45px;font-size:8.85px;line-height:12px;color:#444;-webkit-text-stroke:0.3px #444">10:08:32</div>
</div>
<!-- RIGHT PANEL -->
<div id="right" class="abs"></div>
<div id="rightitems">
<div class="abs" style="left:813px;top:100px;width:178px;height:1px;background:#e4e4e6"></div><div class="abs" style="left:813px;top:99.2px;width:91px;height:1.6px;background:#3b7ad9"></div>
<div class="abs" id="tabp" style="left:829px;top:81px;font-size:8.8px;line-height:13px;color:#222;letter-spacing:0.25px;-webkit-text-stroke:0.25px #222">PROPERTIES</div>
<div class="abs" id="tabs" style="left:935.5px;top:81px;font-size:8.8px;line-height:13px;color:#b4b7e2;letter-spacing:0.3px;-webkit-text-stroke:0.2px #b4b7e2">STYLE</div>
<div class="sep" style="top:106px"></div>
<div class="abs" style="left:998.2px;top:108px;width:1.8px;height:146px;background:#dadadc"></div>

<div class="sec" id="s1" style="left:819px;top:118.9px">DIMENSION</div>
<svg class="abs chev" style="left:975px;top:121px" width="10" height="7" viewBox="0 0 10 7"><path d="M1.4 5.7L5 2L8.6 5.7" stroke="#6a6a6d" stroke-width="1.15" fill="none"/></svg>
<div class="inp" style="left:817.3px;top:148.1px;width:150.2px;height:18.4px"></div>
<div class="lbl" style="left:825.6px;top:151px" id="m1">Mixed</div><div class="unit" style="left:950.8px;top:151px">W</div>
<div class="inp" style="left:817.3px;top:179.3px;width:150.2px;height:18.4px"></div>
<div class="lbl" style="left:825.6px;top:182.4px">Mixed</div><div class="unit" style="left:953px;top:182.4px">H</div>
<svg class="abs" style="left:968px;top:154px" width="16" height="38" viewBox="968 154 16 38"><path d="M971 157.6H975.2V160.8M971 187.6H975.2V184.4" stroke="#d4d4d6" stroke-width="0.9" fill="none"/><rect x="973.2" y="171.6" width="7.4" height="5" rx="0.8" fill="#7a7a7d"/><path d="M975.2 171.6V169.6A1.8 1.8 0 0 1 978.7 169.2" stroke="#7a7a7d" stroke-width="1.1" fill="none"/></svg>

<div class="sep" style="top:219px"></div>
<div class="sec" id="s2" style="letter-spacing:0.7px;left:819px;top:231.4px">ROTATE</div>
<svg class="abs chev" style="left:975px;top:234px" width="10" height="7" viewBox="0 0 10 7"><path d="M1.4 5.7L5 2L8.6 5.7" stroke="#6a6a6d" stroke-width="1.15" fill="none"/></svg>
<div class="lbl" style="left:818.8px;top:252.4px" id="ang">Angle</div>
<div class="inp" style="left:819.2px;top:268px;width:165.6px;height:18.4px"></div>
<div class="lbl" style="left:827px;top:271.2px">0</div><div class="unit" style="left:973.6px;top:269px">°</div>
<div class="lbl" style="left:818.8px;top:298.8px" id="ipx">Inner Pivot X</div>
<div class="lbl" style="left:905.6px;top:298.8px">Inner Pivot Y</div>
<div class="inp" style="left:819.4px;top:315.6px;width:78px;height:18.2px"></div>
<div class="lbl" style="left:827.4px;top:318.6px">Mixed</div><div class="unit" style="left:878px;top:318.6px" id="px">PX</div>
<div class="inp" style="left:906.7px;top:315.6px;width:78px;height:18.2px"></div>
<div class="lbl" style="left:914.2px;top:318.6px">Mixed</div><div class="unit" style="left:964.5px;top:318.6px">PY</div>

<div class="sep" style="top:347px"></div>
<div class="sec" id="s3" style="letter-spacing:0.25px;left:819px;top:359px">COLOR</div>
<svg class="abs chev" style="left:975px;top:361.6px" width="10" height="7" viewBox="0 0 10 7"><path d="M1.4 5.7L5 2L8.6 5.7" stroke="#6a6a6d" stroke-width="1.15" fill="none"/></svg>
<div class="abs" style="left:816.2px;top:379.4px;width:20.4px;height:20.4px;background:#e3e3e6;border-radius:2.5px"></div><div class="abs" style="left:818.2px;top:381.4px;width:17px;height:16.8px;background:#7a787e;border-radius:1.5px"></div>
<svg class="abs" style="left:820px;top:386px" width="14" height="8" viewBox="0 0 14 8" fill="#f4f4f6"><circle cx="3" cy="3.8" r="1.15"/><circle cx="6.8" cy="3.8" r="1.15"/><circle cx="10.6" cy="3.8" r="1.15"/></svg>
<div class="inp" style="left:841.4px;top:380.6px;width:82.8px;height:18.4px"></div>
<div class="lbl" style="left:849.6px;top:383.8px">Mixed</div>
<div class="inp" style="left:929.2px;top:380.6px;width:55.2px;height:18.4px"></div>
<div class="lbl" style="left:935.4px;top:383.8px">Mixed</div><div class="unit" style="left:970px;top:383.8px">%</div>
<div class="abs" style="left:817.4px;top:410.9px;width:11px;height:11px;border:1px solid #a9a9ac;border-radius:50%;background:#fff"></div>
<div class="lbl" style="left:833.7px;top:410.4px" id="atc">Apply Theme Color</div>
<svg class="abs" style="left:928px;top:408px" width="16" height="14" viewBox="928 408 16 14"><path d="M934 412.4L937.9 416.2L934 420L930.1 416.2Z" fill="#fafafa" stroke="#3a3a3c" stroke-width="1" stroke-linejoin="round"/><path d="M930.6 416.4H937.4L934 419.7Z" fill="#3a3a3c"/><path d="M938.4 417.3C938.9 418 939.2 418.4 939.2 418.8A0.8 0.8 0 0 1 937.6 418.8C937.6 418.4 937.9 418 938.4 417.3Z" fill="#3a3a3c"/><text x="938.2" y="414.6" font-size="5.6" fill="#555" font-family="Liberation Sans">3</text></svg>
<div class="abs" style="left:945px;top:407.7px;width:40.8px;height:18.2px;background:#ececee;border:1px solid #e6e6e8;border-radius:3px"></div>
<div class="unit" style="left:953.4px;top:410.6px;color:#c0c0c3">1</div>

<div class="sep" style="top:439.6px"></div>
<div class="sec" id="s4" style="letter-spacing:0.28px;left:819px;top:451px">GYRO</div>
<svg class="abs chev" style="left:975px;top:453.6px" width="10" height="7" viewBox="0 0 10 7"><path d="M1.4 5.7L5 2L8.6 5.7" stroke="#6a6a6d" stroke-width="1.15" fill="none"/></svg>
<div class="abs" style="left:811.4px;top:463.8px;width:103.4px;height:28.6px;border:2px solid #16206f"></div>
<svg class="abs" style="left:818px;top:472px" width="13" height="13" viewBox="0 0 13 13"><circle cx="6.3" cy="6.2" r="5.6" fill="#2f7de6"/><path d="M3.6 6.3L5.5 8.2L9.1 4.4" stroke="#fff" stroke-width="1.3" fill="none"/></svg>
<div class="lbl" style="left:834.7px;top:472.2px" id="ag">Apply Gyro</div>
<div class="sep" style="top:496px"></div>
</div>
<!-- STATUS -->
<div id="status" class="abs"><div class="abs" style="left:936px;top:1.6px;width:38px;height:16px;background:#fff;border:1px solid #f0f0f1;border-radius:2px"></div>
<div class="abs" id="zm" style="left:940.6px;top:3.4px;font-size:8.8px;line-height:12px;color:#666">100</div>
<div class="abs" style="left:959.6px;top:3.8px;font-size:8.4px;line-height:12px;color:#aaa">%</div>
<svg class="abs" style="left:984.6px;top:4.8px" width="11.6" height="9.4" viewBox="0 0 14 11"><rect x="4.2" y="3.2" width="5.6" height="4.6" fill="#444"/><path d="M1.2 1.2L4 3.4M12.8 1.2L10 3.4M1.2 9.8L4 7.6M12.8 9.8L10 7.6" stroke="#444" stroke-width="1.3"/><path d="M1 3.2V1H3.4M10.6 1H13V3.2M13 7.8V10H10.6M3.4 10H1V7.8" stroke="#444" stroke-width="1.1" fill="none"/></svg></div>
</div>
</body>
</html>
